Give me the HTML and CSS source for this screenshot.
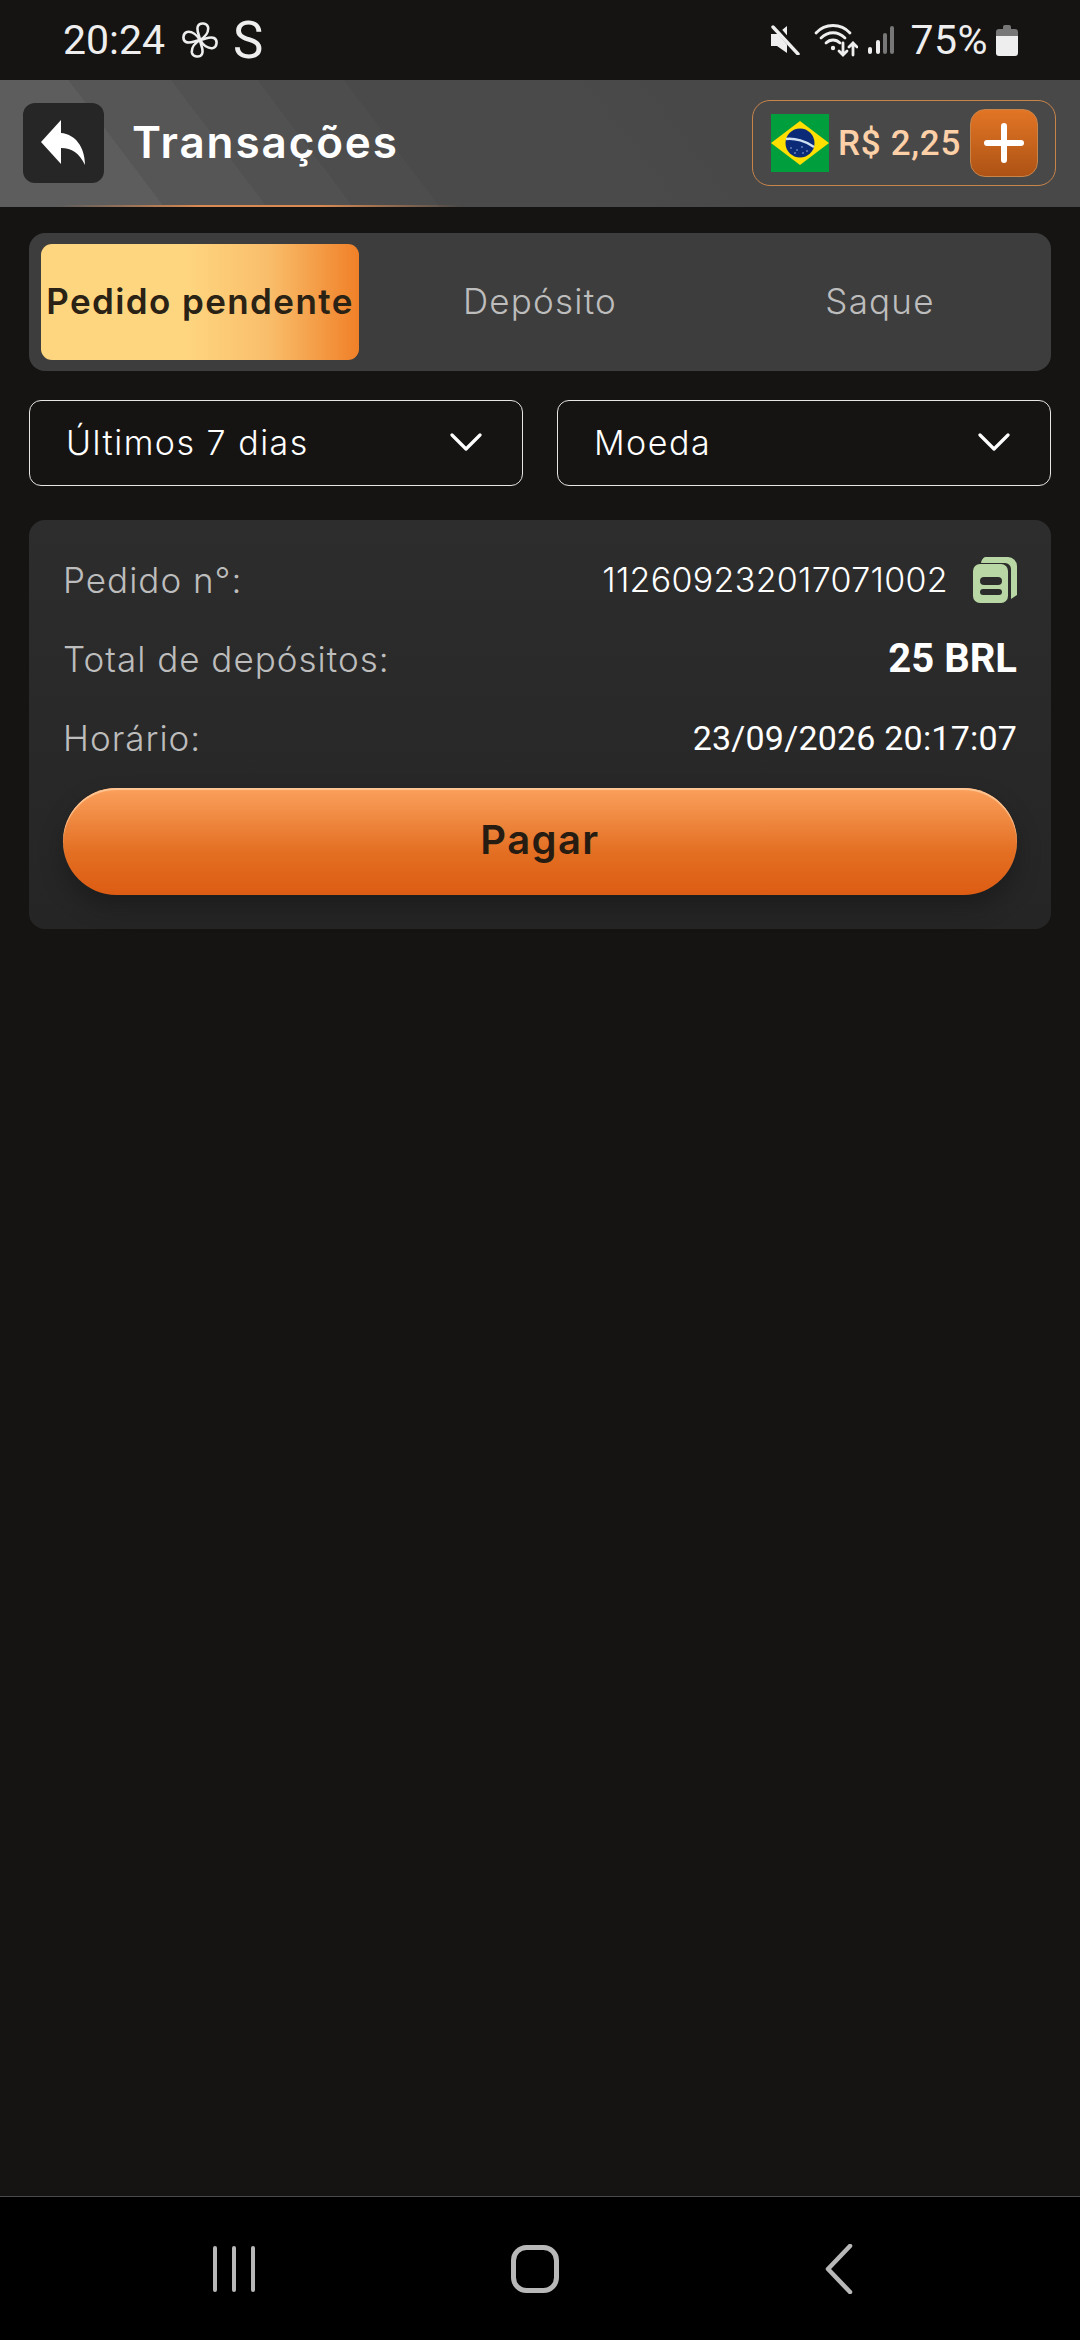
FILE: index.html

```html
<!doctype html>
<html lang="pt-BR">
  <head>
    <meta charset="utf-8">
    <title>Transações</title>
    <link rel="stylesheet" href="styles.css">
  </head>
  <body>
    <div class="status-bar">
      <div class="status-left">
        <span class="clock">20:24</span>
        <svg class="fan-icon" width="36" height="36" viewBox="0 0 36 36" fill="none" stroke="#eee" stroke-width="2.6" stroke-linejoin="round">
          <path d="M18 18C17 12 14 8 16 4C18 0 25 1 26 5C27 10 23 15 18 18Z"/>
          <path d="M18 18C17 12 14 8 16 4C18 0 25 1 26 5C27 10 23 15 18 18Z" transform="rotate(90 18 18)"/>
          <path d="M18 18C17 12 14 8 16 4C18 0 25 1 26 5C27 10 23 15 18 18Z" transform="rotate(180 18 18)"/>
          <path d="M18 18C17 12 14 8 16 4C18 0 25 1 26 5C27 10 23 15 18 18Z" transform="rotate(270 18 18)"/>
        </svg>
        <span class="s-mark">S</span>
      </div>
      <div class="status-right">
        <svg width="30" height="30" viewBox="0 0 30 30">
          <path d="M1 9h6l10-8v27l-10-7H1z" fill="#eee"/>
          <path d="M5 1l24 28" stroke="#151412" stroke-width="6"/>
          <path d="M3 2l25 27" stroke="#eee" stroke-width="3.4" stroke-linecap="round"/>
        </svg>
        <svg class="wifi-icon" width="44" height="34" viewBox="0 0 44 34" fill="none" stroke="#eee" stroke-width="2.8" stroke-linecap="round">
          <path d="M2 10C11 0 27 0 36 10"/>
          <path d="M7 15C14 8 24 8 31 15"/>
          <path d="M12 20C16 16 22 16 26 20"/>
          <circle cx="19" cy="25" r="2.2" fill="#eee" stroke="none"/>
          <path d="M29 20V32M25 28l4 4 4-4"/>
          <path d="M39 32V20M35 24l4-4 4 4"/>
        </svg>
        <svg class="signal-icon" width="28" height="30" viewBox="0 0 28 30" stroke-width="4" stroke-linecap="round">
          <path d="M3 24v3" stroke="#eee"/>
          <path d="M11 17v10" stroke="#eee"/>
          <path d="M18 10v17" stroke="#777"/>
          <path d="M25 3v24" stroke="#777"/>
        </svg>
        <span class="battery-text">75%</span>
        <svg width="22" height="32" viewBox="0 0 22 32">
          <path d="M7 3a2 2 0 0 1 2-2h4a2 2 0 0 1 2 2v2h4a3 3 0 0 1 3 3v4H0V8a3 3 0 0 1 3-3h4z" fill="#777"/>
          <path d="M0 12h22v17a3 3 0 0 1-3 3H3a3 3 0 0 1-3-3z" fill="#eee"/>
        </svg>
      </div>
    </div>

    <header class="top-bar">
      <div class="top-left">
        <button class="back-btn">
          <svg width="46" height="46" viewBox="0 0 46 46">
            <path d="M1 22L21 0V13C35 14 45 27 45 45C39 33 32 28 21 28V44Z" fill="#fff"/>
          </svg>
        </button>
        <h1 class="page-title">Transações</h1>
      </div>
      <div class="balance">
        <svg class="flag" width="58" height="58" viewBox="0 0 58 58">
          <rect width="58" height="58" fill="#009e3d"/>
          <path d="M29 7L58 29 29 51 0 29Z" fill="#fedf00"/>
          <circle cx="29" cy="29" r="14.5" fill="#0b2a78"/>
          <path d="M15 25C24 24 35 27 43 33" stroke="#cfe0f0" stroke-width="2.4" fill="none"/>
          <g fill="#9db8e8">
            <circle cx="20" cy="34" r=".8"/><circle cx="26" cy="36" r=".8"/><circle cx="31" cy="33" r=".8"/>
            <circle cx="36" cy="37" r=".8"/><circle cx="24" cy="39" r=".8"/><circle cx="32" cy="39" r=".8"/>
          </g>
        </svg>
        <span class="balance-value">R$ 2,25</span>
        <button class="plus-btn">
          <svg width="42" height="42" viewBox="0 0 42 42">
            <path d="M21 4v34M4 21h34" stroke="#fff" stroke-width="6" stroke-linecap="round"/>
          </svg>
        </button>
      </div>
    </header>

    <main class="content">
      <nav class="tabs">
        <a class="tab active">Pedido pendente</a>
        <a class="tab">Depósito</a>
        <a class="tab">Saque</a>
      </nav>

      <div class="filters">
        <div class="select">
          <span>Últimos 7 dias</span>
          <svg width="32" height="18" viewBox="0 0 32 18" fill="none" stroke="#fff" stroke-width="3.2" stroke-linecap="round" stroke-linejoin="round"><path d="M2 2l14 14L30 2"/></svg>
        </div>
        <div class="select">
          <span>Moeda</span>
          <svg width="32" height="18" viewBox="0 0 32 18" fill="none" stroke="#fff" stroke-width="3.2" stroke-linecap="round" stroke-linejoin="round"><path d="M2 2l14 14L30 2"/></svg>
        </div>
      </div>

      <section class="order-card">
        <div class="row">
          <span class="label">Pedido n°:</span>
          <span class="order-id">
            112609232017071002
            <svg width="44" height="46" viewBox="0 0 44 46">
              <path d="M12 0H35a9 9 0 0 1 9 9V38l-6 4V12a6 6 0 0 0-6-6H8a8 8 0 0 1 4-6z" fill="#b9d6a5"/>
              <rect y="7" width="35" height="39" rx="7" fill="#b9d6a5"/>
              <rect x="7" y="20" width="22" height="8" rx="4" fill="#2b2b2b"/>
              <rect x="7" y="32" width="22" height="6" rx="3" fill="#2b2b2b"/>
            </svg>
          </span>
        </div>
        <div class="row">
          <span class="label">Total de depósitos:</span>
          <span class="amount">25 BRL</span>
        </div>
        <div class="row">
          <span class="label">Horário:</span>
          <span class="date">23/09/2026 20:17:07</span>
        </div>
        <button class="pay-btn">Pagar</button>
      </section>
    </main>

    <footer class="nav-bar">
      <svg width="44" height="48" viewBox="0 0 44 48" stroke="#b8b8b8" stroke-width="4" stroke-linecap="round">
        <path d="M3 3v42M22 3v42M41 3v42"/>
      </svg>
      <svg class="nav-home" width="48" height="48" viewBox="0 0 48 48" fill="none" stroke="#b8b8b8" stroke-width="5">
        <rect x="2.5" y="2.500" width="43" height="43" rx="13"/>
      </svg>
      <svg class="nav-back" width="28" height="50" viewBox="0 0 28 50" fill="none" stroke="#b8b8b8" stroke-width="4.500" stroke-linecap="round" stroke-linejoin="round">
        <path d="M25 2L3 25l22 23"/>
      </svg>
    </footer>
  </body>
</html>
```

FILE: styles.css

```css
/* Geral */
* {
  box-sizing: border-box;
}

body {
  margin: 0;
  height: 2340px;
  display: flex;
  flex-direction: column;
  background-color: #151412;
  color: #fff;
  font-family: Inter, "Noto Sans", sans-serif;
}

button {
  border: none;
  padding: 0;
  font-family: inherit;
}

/* Barra de status */
.status-bar {
  height: 80px;
  padding: 0 62px 0 63px;
  display: flex;
  justify-content: space-between;
  align-items: center;
  font-family: Roboto, sans-serif;
  font-size: 41px;
  color: #eee;
}

.status-left,
.status-right {
  display: flex;
  align-items: center;
}

.fan-icon {
  margin-left: 17px;
}

.s-mark {
  margin-left: 15px;
  font-size: 51px;
  line-height: 1;
}

.wifi-icon {
  margin-left: 14px;
}

.signal-icon {
  margin-left: 9px;
}

.battery-text {
  margin: 0 8px 0 15px;
  letter-spacing: 0.5px;
}

/* Cabeçalho */
.top-bar {
  height: 127px;
  padding: 0 24px 1px 23px;
  display: flex;
  justify-content: space-between;
  align-items: center;
  background-color: #484848;
  background-image:
    linear-gradient(90deg, transparent 60px, #d98a52 200px, #d98a52 320px, transparent 460px),
    linear-gradient(53deg, #5d5d5d 131px, #565656 131px, #565656 213px, #515151 213px, #515151 282px, #4d4d4d 282px, #4d4d4d 351px, #4a4a4a 351px, #4a4a4a 520px, #484848 600px);
  background-size: 100% 2px, 100% 100%;
  background-position: 0 100%, 0 0;
  background-repeat: no-repeat;
}

.top-left {
  display: flex;
  align-items: center;
  gap: 28px;
}

.back-btn {
  width: 81px;
  height: 80px;
  padding-right: 2px;
  display: flex;
  justify-content: center;
  align-items: center;
  background-color: #262626;
  border-radius: 12px;
}

.page-title {
  margin: 0;
  padding-bottom: 2px;
  font-size: 44px;
  font-weight: 600;
  letter-spacing: 1.9px;
}

.balance {
  width: 304px;
  height: 86px;
  padding: 0 17px 0 18px;
  display: flex;
  align-items: center;
  border: 1.5px solid #c8854a;
  border-radius: 18px;
}

.balance-value {
  margin-left: 9px;
  font-family: Roboto, sans-serif;
  font-size: 35px;
  font-weight: 500;
  letter-spacing: 0.7px;
  color: #fdd0a8;
  white-space: nowrap;
}

.plus-btn {
  margin-left: auto;
  width: 68px;
  height: 68px;
  display: flex;
  justify-content: center;
  align-items: center;
  background: linear-gradient(#e27525, #ad5315);
  border: 1px solid #c8854a;
  border-radius: 15px;
}

/* Conteúdo */
.content {
  flex: 1;
  padding: 26px 29px 0;
}

/* Abas */
.tabs {
  height: 138px;
  padding: 11px 12px;
  display: grid;
  grid-template-columns: repeat(3, 1fr);
  column-gap: 22px;
  background-color: #3d3d3d;
  border-radius: 16px;
}

.tab {
  padding-bottom: 2px;
  display: flex;
  justify-content: center;
  align-items: center;
  font-size: 35px;
  font-weight: 300;
  letter-spacing: 1.2px;
  color: #bdbdbd;
  white-space: nowrap;
}

.tab.active {
  background: linear-gradient(90deg, #ffd680 45%, #f9bd6a 72%, #f08028 100%);
  border-radius: 11px;
  color: #2a2215;
  font-weight: 600;
  letter-spacing: 1.4px;
}

/* Filtros */
.filters {
  margin-top: 29px;
  display: grid;
  grid-template-columns: 1fr 1fr;
  column-gap: 34px;
}

.select {
  height: 86px;
  padding: 0 40px 2px 36px;
  display: flex;
  justify-content: space-between;
  align-items: center;
  border: 1.5px solid #e6e6e6;
  border-radius: 12px;
  font-size: 34px;
  font-weight: 300;
  letter-spacing: 1.5px;
}

/* Cartão do pedido */
.order-card {
  margin-top: 34px;
  height: 409px;
  padding: 20px 34px 0;
  background: linear-gradient(#2d2d2d, #252525);
  border-radius: 16px;
}

.row {
  height: 79px;
  display: flex;
  justify-content: space-between;
  align-items: center;
}

.label {
  font-size: 35px;
  font-weight: 300;
  letter-spacing: 1px;
  color: #bdbdbd;
}

.order-id {
  display: flex;
  align-items: center;
  gap: 25px;
  font-size: 34px;
  font-weight: 300;
  letter-spacing: 0.3px;
}

.amount {
  font-family: Roboto, sans-serif;
  font-size: 40px;
  font-weight: 700;
}

.date {
  font-family: Roboto, sans-serif;
  font-size: 34px;
  letter-spacing: 0.2px;
}

.pay-btn {
  margin-top: 11px;
  padding-bottom: 4px;
  width: 100%;
  height: 107px;
  display: block;
  background: linear-gradient(#fba05c, #e36f22 60%, #dd5c14);
  border-radius: 54px;
  box-shadow: inset 0 2px 1px #ffc795, 0 12px 24px rgba(0, 0, 0, 0.25);
  color: #261c12;
  font-size: 40px;
  font-weight: 600;
  letter-spacing: 1.4px;
}

/* Barra de navegação */
.nav-bar {
  height: 144px;
  padding-left: 212px;
  display: flex;
  align-items: center;
  background-color: #000;
  border-top: 1.5px solid #4a4a4a;
}

.nav-home {
  margin-left: 255px;
}

.nav-back {
  margin-left: 266px;
}
```
